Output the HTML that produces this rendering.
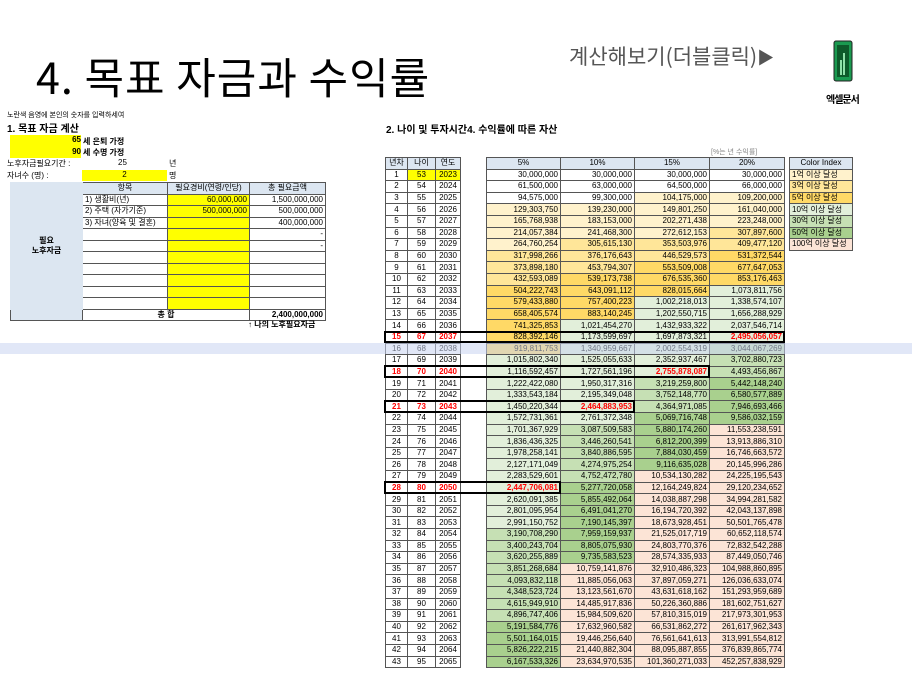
<!DOCTYPE html>
<html><head><meta charset="utf-8">
<style>
*{margin:0;padding:0;box-sizing:border-box}
body{width:912px;height:684px;background:#fff;position:relative;overflow:hidden;font-family:"Liberation Sans","Noto Sans CJK KR",sans-serif;color:#000}
.a{position:absolute;white-space:nowrap}
table{border-collapse:collapse;table-layout:fixed;position:absolute}
td{border:1px solid #555;font-size:8px;line-height:10px;height:11.6px;padding:0 2px;overflow:hidden;white-space:nowrap}
#L td{height:11.5px}
.r{text-align:right}.c{text-align:center}
.y{background:#ffff00}
.h{background:#dce6f1;text-align:center}
.red{color:#ff0000;font-weight:bold}
</style></head><body>
<div class="a" style="left:36px;top:46px;font-size:43px;line-height:60px;font-family:'Noto Sans CJK KR',sans-serif;letter-spacing:1px">4. 목표 자금과 수익률</div>
<div class="a" style="left:569px;top:42px;font-size:21px;line-height:28px;color:#555;font-family:'Noto Sans CJK KR',sans-serif">계산해보기(더블클릭)<span style="font-size:17px">▶</span></div>
<svg class="a" style="left:832px;top:40px" width="22" height="42" viewBox="0 0 22 42">
<rect x="2" y="1" width="18" height="40" rx="2" fill="#1a9a50" stroke="#222" stroke-width="1"/>
<rect x="5" y="5" width="12" height="32" fill="#0d5a2a"/>
<rect x="8" y="20" width="2" height="15" fill="#8fe0a8"/><rect x="11" y="13" width="2" height="22" fill="#8fe0a8"/>
</svg>
<div class="a" style="left:826px;top:91px;font-size:10px;font-weight:bold;letter-spacing:-1px">엑셀문서</div>

<div class="a" style="left:7px;top:110px;font-size:7px">노란색 음영에 본인의 숫자를 입력하세여</div>
<div class="a" style="left:7px;top:120px;font-size:10px;font-weight:bold">1. 목표 자금 계산</div>
<div class="a y" style="left:10px;top:135px;width:71px;height:12px;font-size:8px;font-weight:bold;text-align:right">65</div>
<div class="a y" style="left:10px;top:147px;width:71px;height:11px;font-size:8px;font-weight:bold;text-align:right">90</div>
<div class="a" style="left:83px;top:136px;font-size:8px;font-weight:bold">세 은퇴 가정</div>
<div class="a" style="left:83px;top:147px;font-size:8px;font-weight:bold">세 수명 가정</div>
<div class="a" style="left:7px;top:158px;font-size:8px">노후자금필요기간 :</div>
<div class="a" style="left:118px;top:158px;font-size:8px">25</div>
<div class="a" style="left:169px;top:158px;font-size:8px">년</div>
<div class="a" style="left:7px;top:170px;font-size:8px">자녀수 (명) :</div>
<div class="a y" style="left:82px;top:170px;width:85px;height:11px;font-size:8px;text-align:center">2</div>
<div class="a" style="left:169px;top:170px;font-size:8px">명</div>

<table id="L" style="left:10px;top:182px;width:315px">
<col style="width:72px"><col style="width:85px"><col style="width:82px"><col style="width:76px">
<tr><td rowspan="11" class="h" style="font-weight:bold;border-color:#dce6f1">필요<br>노후자금</td><td class="h">항목</td><td class="h">필요경비(연령/인당)</td><td class="h">총 필요금액</td></tr>
<tr><td>1) 생활비(년)</td><td class="y r">60,000,000</td><td class="r">1,500,000,000</td></tr>
<tr><td>2) 주택 (자가기준)</td><td class="y r">500,000,000</td><td class="r">500,000,000</td></tr>
<tr><td>3) 자녀(양육 및 결혼)</td><td class="y"></td><td class="r">400,000,000</td></tr>
<tr><td></td><td class="y"></td><td class="r">-</td></tr>
<tr><td></td><td class="y"></td><td class="r">-</td></tr>
<tr><td></td><td class="y"></td><td></td></tr>
<tr><td></td><td class="y"></td><td></td></tr>
<tr><td></td><td class="y"></td><td></td></tr>
<tr><td></td><td class="y"></td><td></td></tr>
<tr><td></td><td class="y"></td><td></td></tr>
<tr><td class="h" style="background:#dce6f1"></td><td colspan="2" class="c" style="font-weight:bold">총 합</td><td class="r" style="font-weight:bold">2,400,000,000</td></tr>
</table>
<div class="a" style="left:248px;top:319px;font-size:8px;font-weight:bold">↑ 나의 노후필요자금</div>

<div class="a" style="left:386px;top:121px;font-size:10px;font-weight:bold">2. 나이 및 투자시간4. 수익률에 따른 자산</div>
<div class="a" style="left:711px;top:147px;font-size:7px;color:#888">[%는 년 수익률]</div>

<table id="A" style="left:385px;top:157px;width:75px"><col style="width:22px"><col style="width:28px"><col style="width:25px"></table>
<table id="B" style="left:486px;top:157px;width:298px"><col style="width:74px"><col style="width:74px"><col style="width:75px"><col style="width:75px"></table>
<table id="C" style="left:789px;top:157px;width:64px">
<tr><td class="h">Color Index</td></tr>
<tr><td style="background:#fff2cc">1억 이상 달성</td></tr>
<tr><td style="background:#ffe699">3억 이상 달성</td></tr>
<tr><td style="background:#ffd966">5억 이상 달성</td></tr>
<tr><td style="background:#e2efda">10억 이상 달성</td></tr>
<tr><td style="background:#c6e0b4">30억 이상 달성</td></tr>
<tr><td style="background:#a9d08e">50억 이상 달성</td></tr>
<tr><td style="background:#fce4d6">100억 이상 달성</td></tr>
</table>
<div id="boxes"></div>
<div class="a" style="left:0;top:343px;width:912px;height:11px;background:rgba(200,212,240,0.55)"></div>

<script>
(function(){
var A=document.getElementById('A'),B=document.getElementById('B');
A.insertAdjacentHTML('beforeend','<tr><td class="h">년차</td><td class="h">나이</td><td class="h">연도</td></tr>');
B.insertAdjacentHTML('beforeend','<tr><td class="h">5%</td><td class="h">10%</td><td class="h">15%</td><td class="h">20%</td></tr>');
var rates=[0.05,0.1,0.15,0.2],v=[0,0,0,0];
var red={15:3,18:2,21:1,28:0};
function col(x){if(x>=1e10)return'#fce4d6';if(x>=5e9)return'#a9d08e';if(x>=3e9)return'#c6e0b4';if(x>=1e9)return'#e2efda';if(x>=5e8)return'#ffd966';if(x>=3e8)return'#ffe699';if(x>=1e8)return'#fff2cc';return'#fff';}
var bx='';
for(var n=1;n<=43;n++){
 var rc=red[n]!==undefined;
 var cls=rc?'c red':'c';
 var y1=n==1?' y':'';
 A.insertAdjacentHTML('beforeend','<tr><td class="'+cls+'">'+n+'</td><td class="'+cls+y1+'">'+(52+n)+'</td><td class="'+cls+y1+'">'+(2022+n)+'</td></tr>');
 var contrib=Math.min(5e7,3e7+1e7*Math.floor((n-1)/5));
 var h='<tr>';
 for(var i=0;i<4;i++){v[i]=v[i]*(1+rates[i])+contrib;var x=Math.round(v[i]);
  h+='<td class="r'+(rc&&red[n]==i?' red':'')+'" style="background:'+col(x)+'">'+x.toLocaleString('en-US')+'</td>';}
 B.insertAdjacentHTML('beforeend',h+'</tr>');
 if(rc){var tp=168.6+(n-1)*11.6;var right=[560,634,709,784][red[n]];
  bx+='<div class="a" style="left:384px;top:'+(tp-0.5)+'px;width:'+(right-383)+'px;height:12.6px;border:2px solid #000"></div>';}
}
document.getElementById('boxes').innerHTML=bx;
})();
</script>
</body></html>
